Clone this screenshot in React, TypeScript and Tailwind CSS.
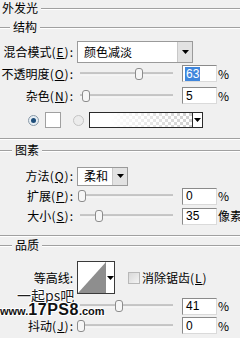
import React from "react";

const Line = () => <div className="flex-1 h-px bg-[#a0a0a0] shadow-[0_1px_0_#ffffff]" />;

function Label({ main, k, colon = true }: { main: string; k?: string; colon?: boolean }) {
  return (
    <div className="w-[74px] shrink-0 text-right whitespace-nowrap leading-none">
      {main}
      {k ? (
        <span className="tracking-[1px]">
          (<u>{k}</u>)
        </span>
      ) : null}
      {colon ? <span className="tracking-[1px]">:</span> : null}
    </div>
  );
}

function Slider({ thumb }: { thumb: number }) {
  return (
    <div className="relative w-[103px] h-full shrink-0 ml-[3px]">
      <div className="absolute left-[3px] w-[93px] top-1/2 h-[3px] -translate-y-1/2 border-t border-[#a4a4a4] bg-[#e4e4e4] border-b border-b-white" />
      <div
        className="absolute top-1/2 -translate-y-1/2 w-[8px] h-[12px] rounded-[3px] border border-[#8c8c8c] bg-[#f6f6f6]"
        style={{ left: thumb }}
      />
    </div>
  );
}

function Num({ v, sel = false }: { v: string; sel?: boolean }) {
  return (
    <div className="ml-[2px] w-[35px] h-[17px] shrink-0 bg-white border border-[#8a8a8a] border-r-[#dadada] border-b-[#dadada] flex items-center pl-[2px] font-['Liberation_Sans',sans-serif] text-[12px] leading-none">
      {sel ? <span className="bg-[#3f86dc] text-white px-[1px] py-[1px]">{v}</span> : <span className="px-[1px]">{v}</span>}
    </div>
  );
}

const Unit = ({ t }: { t: string }) => <div className="ml-[1px] whitespace-nowrap leading-none">{t}</div>;

const Arrow = () => (
  <svg width="7" height="4" viewBox="0 0 7 4">
    <path d="M0 0h7L3.5 4z" fill="#000" />
  </svg>
);

export default function App() {
  return (
    <div className="relative w-[240px] h-[338px] overflow-hidden bg-[#f0f0f0] text-[12px] text-black font-['Noto_Sans_CJK_SC','Noto_Sans',sans-serif]">
      {/* title */}
      <div className="flex items-center h-[16px]">
        <div className="pl-[2px] pr-[3px] leading-none">外发光</div>
        <Line />
      </div>
      {/* 结构 */}
      <div className="flex items-center h-[14px] mt-[4px]">
        <div className="w-[10px] h-px bg-[#a0a0a0] shadow-[0_1px_0_#ffffff]" />
        <div className="px-[3px] leading-none">结构</div>
        <Line />
      </div>
      {/* 混合模式 */}
      <div className="flex items-center h-[22px] mt-[7px]">
        <Label main="混合模式" k="E" />
        <div className="ml-[3px] w-[116px] h-[22px] flex bg-white border border-[#9a9a9a]">
          <div className="flex-1 flex items-center pl-[6px] leading-none">颜色减淡</div>
          <div className="w-[15px] bg-[#e2e2e2] border-l border-[#c8c8c8] flex items-center justify-center">
            <Arrow />
          </div>
        </div>
      </div>
      {/* 不透明度 */}
      <div className="flex items-center h-[19px] mt-[1px]">
        <Label main="不透明度" k="O" />
        <Slider thumb={58} />
        <Num v="63" sel />
        <Unit t="%" />
      </div>
      {/* 杂色 */}
      <div className="flex items-center h-[19px] mt-[3px]">
        <Label main="杂色" k="N" />
        <Slider thumb={5} />
        <Num v="5" />
        <Unit t="%" />
      </div>
      {/* color row */}
      <div className="flex items-center h-[16px] mt-[7px] pl-[28px]">
        <div className="w-[11px] h-[11px] rounded-full border border-[#8a9aa8] bg-[#e6eef4] flex items-center justify-center">
          <div className="w-[5px] h-[5px] rounded-full bg-[#1d4d7a]" />
        </div>
        <div className="ml-[6px] w-[16px] h-[16px] bg-white border border-[#a0a0a0]" />
        <div className="ml-[12px] w-[11px] h-[11px] rounded-full border border-[#c4c4c4] bg-[#ececec]" />
        <div className="ml-[5px] w-[114px] h-[16px] flex border border-[#2a2a2a]">
          <div className="relative flex-1 bg-[conic-gradient(#cfcfcf_25%,#ffffff_0_50%,#cfcfcf_0_75%,#ffffff_0)] bg-[length:6px_6px]">
            <div className="absolute inset-0 bg-gradient-to-r from-white from-20% to-transparent" />
          </div>
          <div className="w-[10px] bg-white border-l border-[#2a2a2a] flex items-center justify-center">
            <Arrow />
          </div>
        </div>
      </div>
      {/* separator */}
      <div className="mt-[10px] h-px bg-[#a0a0a0] shadow-[0_1px_0_#ffffff]" />
      {/* 图素 */}
      <div className="flex items-center h-[14px] mt-[4px]">
        <div className="w-[12px] h-px bg-[#a0a0a0] shadow-[0_1px_0_#ffffff]" />
        <div className="px-[3px] leading-none">图素</div>
        <Line />
      </div>
      {/* 方法 */}
      <div className="flex items-center h-[20px] mt-[9px]">
        <Label main="方法" k="Q" />
        <div className="ml-[3px] w-[51px] h-[19px] flex bg-white border border-[#9a9a9a]">
          <div className="flex-1 flex items-center pl-[6px] leading-none">柔和</div>
          <div className="w-[15px] bg-[#e2e2e2] border-l border-[#c8c8c8] flex items-center justify-center">
            <Arrow />
          </div>
        </div>
      </div>
      {/* 扩展 */}
      <div className="flex items-center h-[18px] mt-[1px]">
        <Label main="扩展" k="P" />
        <Slider thumb={1} />
        <Num v="0" />
        <Unit t="%" />
      </div>
      {/* 大小 */}
      <div className="flex items-center h-[18px] mt-[2px]">
        <Label main="大小" k="S" />
        <Slider thumb={18} />
        <Num v="35" />
        <Unit t="像素" />
      </div>
      {/* separator */}
      <div className="mt-[10px] h-px bg-[#a0a0a0] shadow-[0_1px_0_#ffffff]" />
      {/* 品质 */}
      <div className="flex items-center h-[14px] mt-[2px]">
        <div className="w-[12px] h-px bg-[#a0a0a0] shadow-[0_1px_0_#ffffff]" />
        <div className="px-[3px] leading-none">品质</div>
        <Line />
      </div>
      {/* 等高线 */}
      <div className="flex items-center h-[33px] mt-[9px]">
        <Label main="等高线" />
        <div className="ml-[3px] w-[38px] h-[33px] flex bg-white border border-[#3a3a3a]">
          <div className="w-[28px] h-full border-r border-[#c8c8c8]">
            <svg width="28" height="31" viewBox="0 0 28 31" className="block">
              <path d="M0 31L28 0V31z" fill="#8e8e8e" />
            </svg>
          </div>
          <div className="flex-1 flex items-center justify-center">
            <Arrow />
          </div>
        </div>
        <div className="ml-[13px] w-[12px] h-[12px] border border-[#b8b8b8] bg-gradient-to-br from-[#d8d8d8] to-[#f4f4f4]" />
        <div className="ml-[2px] leading-none whitespace-nowrap">
          消除锯齿<span className="tracking-[1px]">(<u>L</u>)</span>
        </div>
      </div>
      {/* 范围 (covered by watermark) */}
      <div className="flex items-center h-[18px] mt-[3px]">
        <div className="w-[74px] shrink-0" />
        <Slider thumb={38} />
        <Num v="41" />
        <Unit t="%" />
      </div>
      {/* 抖动 */}
      <div className="flex items-center h-[19px] mt-[1px]">
        <Label main="抖动" k="J" />
        <Slider thumb={0} />
        <Num v="0" />
        <Unit t="%" />
      </div>

      {/* watermark */}
      <div className="absolute left-[17px] top-[288px] text-[14px] leading-[14px] text-[#1e1e1e] [text-shadow:0_0_1px_#fff,1px_0_0_#fff,-1px_0_0_#fff,0_1px_0_#fff,0_-1px_0_#fff]">
        一起ps吧
      </div>
      <div className="absolute left-0 top-[303px] h-[14px] flex items-baseline leading-[14px] font-['Liberation_Sans',sans-serif] font-bold text-[#111] [text-shadow:1px_0_0_#fff,-1px_0_0_#fff,0_1px_0_#fff,0_-1px_0_#fff,1px_1px_0_#fff,-1px_-1px_0_#fff]">
        <span className="text-[11px]">www.</span>
        <span className="text-[16px] tracking-[0.5px]">17PS8</span>
        <span className="text-[11px]">.com</span>
      </div>
    </div>
  );
}
